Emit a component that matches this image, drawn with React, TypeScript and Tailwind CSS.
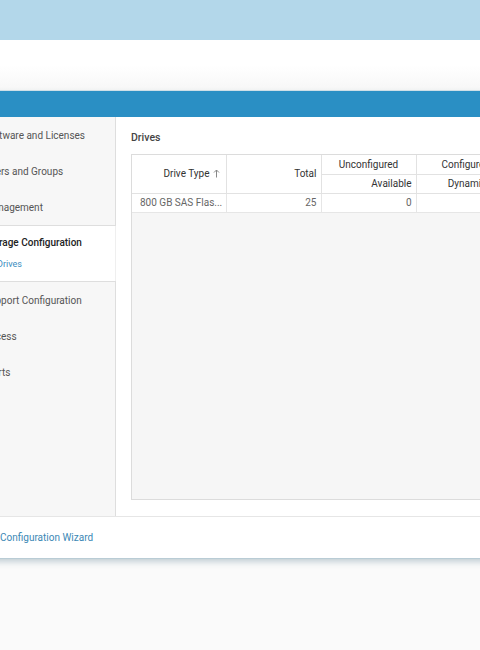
import React from 'react';

const topItems = ['Software and Licenses', 'Users and Groups', 'Management'];
const bottomItems = ['Support Configuration', 'Access', 'Alerts'];

export default function App() {
  return (
    <div className="w-[480px] h-[650px] overflow-hidden bg-[#fafafa] font-['Roboto',sans-serif] text-[10px]">
      <div className="h-[40px] bg-[#b3d7ea]" />
      <div className="h-[51px] bg-gradient-to-b from-white via-white to-[#f7f7f7] border-b border-[#d6e4ec]" />

      <div className="ml-[-36px] w-[640px] bg-white border-b border-[#b9ccd5] shadow-[0_3px_6px_rgba(70,110,130,0.3)]">
        <div className="h-[26px] bg-[#2a8fc4] flex items-center text-white text-[10px]">
          <span className="ml-[-2px]">Settings</span>
        </div>

        <div className="flex h-[399px]">
          <div className="w-[152px] flex flex-col text-[#555]">
            <div className="bg-[#f7f7f7] border-r border-b border-[#dedede]">
              {topItems.map((item) => (
                <div key={item} className="h-[36px] flex items-center pl-[20px] whitespace-nowrap">
                  {item}
                </div>
              ))}
            </div>
            <div className="h-[55px] pl-[20px] pt-[11px] border-r border-[#efefef]">
              <div className="leading-[12px] text-[#222] font-medium whitespace-nowrap">Storage Configuration</div>
              <div className="mt-[10px] pl-[13px] leading-[10px] text-[9px] text-[#3a8cc0]">Drives</div>
            </div>
            <div className="flex-1 bg-[#f7f7f7] border-r border-t border-[#dedede]">
              {bottomItems.map((item) => (
                <div key={item} className="h-[36px] flex items-center pl-[20px] whitespace-nowrap">
                  {item}
                </div>
              ))}
            </div>
          </div>

          <div className="flex-1 flex flex-col bg-white pl-[15px] pb-[16px]">
            <div className="h-[37px] flex items-center pt-[5px] text-[#444] text-[10.5px] font-medium">Drives</div>
            <div className="flex-1 border border-[#dcdcdc] bg-[#f6f6f6] overflow-hidden">
              <table className="border-collapse text-[10px] table-fixed">
                <colgroup>
                  <col className="w-[94px]" />
                  <col className="w-[95px]" />
                  <col className="w-[95px]" />
                  <col className="w-[75px]" />
                  <col className="w-[24px]" />
                </colgroup>
                <thead className="bg-white text-[#333]">
                  <tr className="h-[19px]">
                    <th rowSpan={2} className="font-normal text-right pr-[6px] border-r border-b border-[#e2e2e2] whitespace-nowrap">
                      <span className="inline-flex items-center gap-[3px]">
                        Drive Type
                        <svg width="7" height="9" viewBox="0 0 7 9" fill="none" stroke="#888" strokeWidth="1">
                          <path d="M3.5 8.5V1M1 3.5L3.5 1L6 3.5" />
                        </svg>
                      </span>
                    </th>
                    <th rowSpan={2} className="font-normal text-right pr-[4px] border-r border-b border-[#e2e2e2]">
                      Total
                    </th>
                    <th className="font-normal text-center border-r border-b border-[#e2e2e2]">Unconfigured</th>
                    <th colSpan={2} className="font-normal text-center border-b border-[#e2e2e2] whitespace-nowrap">Configured</th>
                  </tr>
                  <tr className="h-[19px]">
                    <th className="font-normal text-right pr-[4px] border-r border-b border-[#e2e2e2]">Available</th>
                    <th className="font-normal text-right pr-[4px] border-r border-b border-[#e2e2e2]">Dynamic</th>
                    <th className="font-normal text-right pr-[4px] border-b border-[#e2e2e2]"></th>
                  </tr>
                </thead>
                <tbody className="bg-white text-[#666]">
                  <tr className="h-[19px]">
                    <td className="pl-[8px] border-r border-b border-[#e6e6e6] whitespace-nowrap overflow-hidden">800 GB SAS Flas...</td>
                    <td className="text-right pr-[4px] border-r border-b border-[#e6e6e6]">25</td>
                    <td className="text-right pr-[4px] border-r border-b border-[#e6e6e6]">0</td>
                    <td className="text-right pr-[4px] border-r border-b border-[#e6e6e6]"></td>
                    <td className="text-right pr-[4px] border-b border-[#e6e6e6]"></td>
                  </tr>
                </tbody>
              </table>
            </div>
          </div>
        </div>

        <div className="h-[42px] border-t border-[#e6e6e6] flex items-center pl-[36px] pr-[70px] text-[#3b88b5]">
          <span>Configuration Wizard</span>
          <span className="ml-auto">Close</span>
        </div>
      </div>
    </div>
  );
}
